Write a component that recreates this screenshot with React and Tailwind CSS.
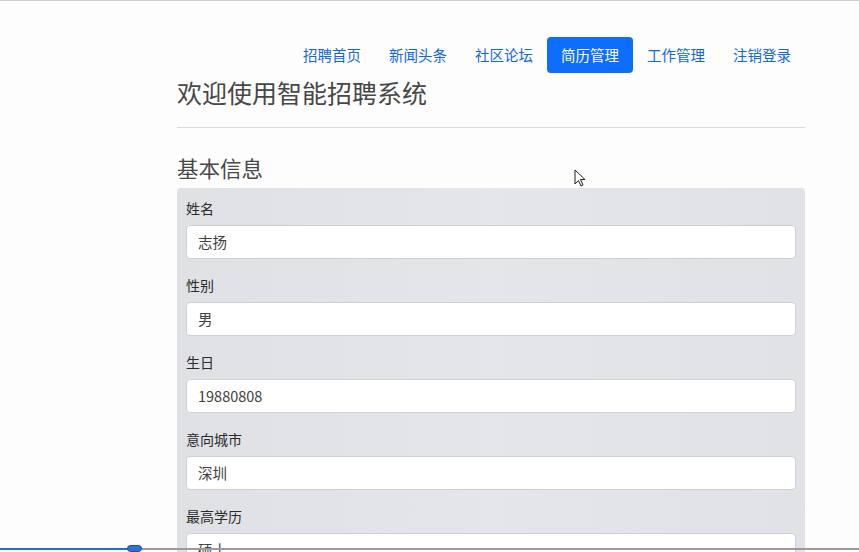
import React from 'react';

const navItems = ['招聘首页', '新闻头条', '社区论坛', '简历管理', '工作管理', '注销登录'];

const fields = [
  { label: '姓名', value: '志扬' },
  { label: '性别', value: '男' },
  { label: '生日', value: '19880808' },
  { label: '意向城市', value: '深圳' },
  { label: '最高学历', value: '硕士' },
];

const App = () => {
  return (
    <div
      className="relative h-[552px] w-[859px] overflow-hidden bg-[#fdfdfd] border-t border-[#cfcfcf]"
      style={{ fontFamily: '"Noto Sans CJK SC", "Noto Sans", "Liberation Sans", sans-serif' }}
    >
      <div className="ml-[177px] flex w-[628px] flex-col">
        <nav className="flex justify-end pt-[36px]">
          {navItems.map((item) => (
            <a
              key={item}
              className={
                item === '简历管理'
                  ? 'h-[36px] rounded-[4px] bg-[#0d6efd] px-[14px] text-[14.5px] leading-[36px] text-white'
                  : 'h-[36px] px-[14px] text-[14.5px] leading-[36px] text-[#1266e0]'
              }
            >
              {item}
            </a>
          ))}
        </nav>

        <h1 className="mt-[4px] text-[25px] leading-[30px] text-[#474747]">欢迎使用智能招聘系统</h1>
        <hr className="mt-[20px] border-t border-[#dcdcdc]" />

        <h2 className="mt-[27px] text-[21.5px] leading-[26px] text-[#474747]">基本信息</h2>

        <div className="mt-[7px] flex flex-col gap-[16px] rounded-[4px] bg-gradient-to-r from-[#dfe1e5] via-[#e4e6ea] to-[#e0e2e6] px-[9px] pt-[10px] pb-4">
          {fields.map((f) => (
            <div key={f.label} className="flex flex-col gap-[7px]">
              <label className="text-[14px] leading-[20px] text-[#2b2b2b]">{f.label}</label>
              <div className="h-[34px] rounded-[4px] border border-[#cdd1d6] bg-white px-[11px] text-[14.5px] leading-[32px] text-[#404040]">
                {f.value}
              </div>
            </div>
          ))}
        </div>
      </div>

      {/* mouse cursor */}
      <svg className="absolute left-[574px] top-[168px]" width="12" height="19" viewBox="0 0 12 19">
        <path d="M1 1 L1 15 L4.5 11.5 L7 17 L9 16 L6.5 10.5 L11 10.5 Z" fill="#fff" stroke="#222" strokeWidth="1" />
      </svg>

      {/* video progress bar */}
      <div className="absolute bottom-[2px] left-0 h-[2px] w-full bg-[#9a9a9a]" />
      <div className="absolute bottom-[2px] left-0 h-[2px] w-[134px] bg-[#1a6fd6]" />
      <div className="absolute bottom-0 left-[127px] h-[7px] w-[15px] rounded-full bg-[#2d74d0] border border-[#1b4f9c]" />
    </div>
  );
};

export default App;
